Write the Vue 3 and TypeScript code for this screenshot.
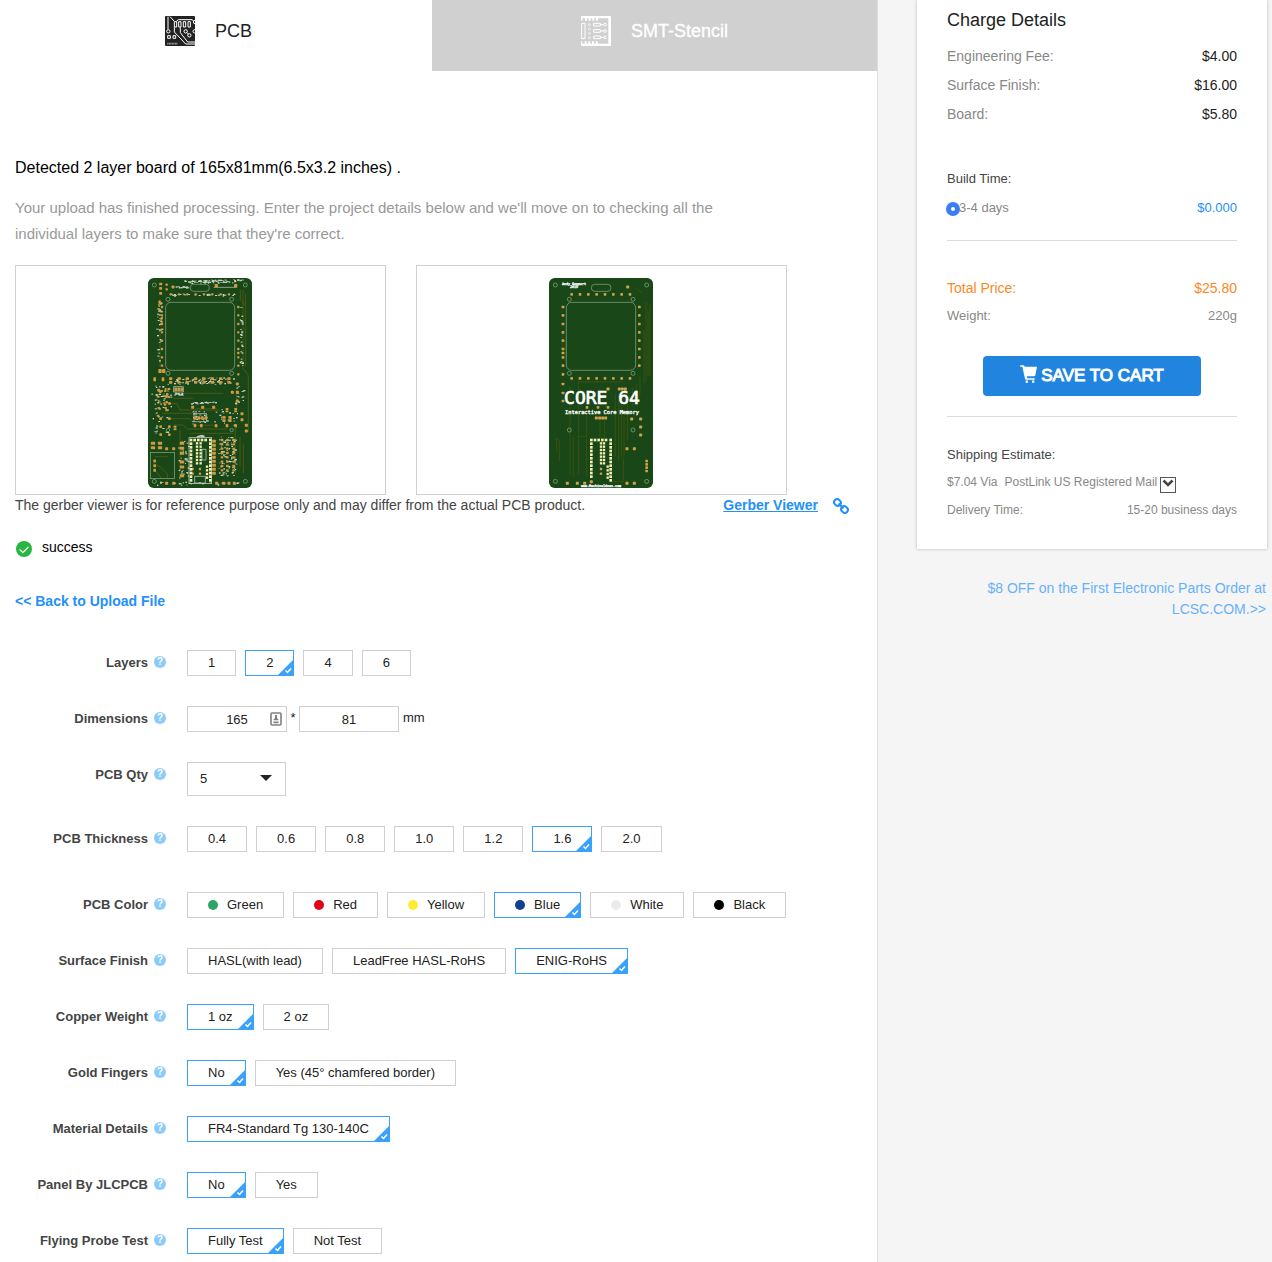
<script setup lang="ts">
import { reactive, ref } from 'vue'

interface Option {
  label: string
  swatch?: string
}

interface OptionRow {
  key: string
  label: string
  options: Option[]
  spaced?: boolean
}

interface Pad {
  x: number
  y: number
  w: number
  h: number
}

const plain = (...labels: string[]): Option[] => labels.map((label) => ({ label }))

const layerRow: OptionRow = { key: 'layers', label: 'Layers', options: plain('1', '2', '4', '6') }

const optionRows: OptionRow[] = [
  { key: 'thickness', label: 'PCB Thickness', options: plain('0.4', '0.6', '0.8', '1.0', '1.2', '1.6', '2.0'), spaced: true },
  {
    key: 'color',
    label: 'PCB Color',
    options: [
      { label: 'Green', swatch: '#2ea566' },
      { label: 'Red', swatch: '#e2001a' },
      { label: 'Yellow', swatch: '#ffeb36' },
      { label: 'Blue', swatch: '#10408f' },
      { label: 'White', swatch: '#ebebeb' },
      { label: 'Black', swatch: '#000000' },
    ],
  },
  { key: 'finish', label: 'Surface Finish', options: plain('HASL(with lead)', 'LeadFree HASL-RoHS', 'ENIG-RoHS') },
  { key: 'copper', label: 'Copper Weight', options: plain('1 oz', '2 oz') },
  { key: 'gold', label: 'Gold Fingers', options: plain('No', 'Yes (45° chamfered border)') },
  { key: 'material', label: 'Material Details', options: plain('FR4-Standard Tg 130-140C') },
  { key: 'panel', label: 'Panel By JLCPCB', options: plain('No', 'Yes') },
  { key: 'probe', label: 'Flying Probe Test', options: plain('Fully Test', 'Not Test') },
]

const selected = reactive<Record<string, string>>({
  layers: '2',
  thickness: '1.6',
  color: 'Blue',
  finish: 'ENIG-RoHS',
  copper: '1 oz',
  gold: 'No',
  material: 'FR4-Standard Tg 130-140C',
  panel: 'No',
  probe: 'Fully Test',
})

const boardWidth = ref('165')
const boardHeight = ref('81')
const quantity = ref('5')
const shipping = ref('PostLink US Registered Mail')
const buildTime = ref('3-4 days')

const charges = [
  { label: 'Engineering Fee:', amount: '$4.00' },
  { label: 'Surface Finish:', amount: '$16.00' },
  { label: 'Board:', amount: '$5.80' },
]

/* Deterministic scatter, so that the board art is the same on every load. */
function makeRandom(seed: number) {
  let s = seed
  return () => {
    s = (s * 16807) % 2147483647
    return s / 2147483647
  }
}

function scatter(seed: number, count: number, x: number, y: number, w: number, h: number, pw: number, ph: number): Pad[] {
  const rnd = makeRandom(seed * 7919)
  rnd()
  return Array.from({ length: count }, () => ({
    x: Math.round(x + rnd() * w),
    y: Math.round(y + rnd() * h),
    w: pw + Math.round(rnd() * 3),
    h: ph + Math.round(rnd() * 2),
  }))
}

function grid(xs: number[], ys: number[], w: number, h = w): Pad[] {
  return xs.flatMap((x) => ys.map((y) => ({ x: x - w / 2, y: y - h / 2, w, h })))
}

const steps = (from: number, to: number, by: number): number[] => {
  const out: number[] = []
  for (let v = from; v <= to; v += by) out.push(v)
  return out
}

const frontGold: Pad[] = [
  ...grid(steps(92, 280, 25), [73], 7),
  ...grid([295], [111, 136, 162, 187, 212, 237, 249, 262, 287, 313], 7),
  ...grid([66], [111, 136, 162, 187, 212, 237, 262, 287], 7),
  ...grid([229, 287], [47], 10),
  ...grid([62], [42, 55, 70], 9, 8),
  ...grid([80], [44, 58], 7),
  ...grid([99], [51], 9),
  ...grid(steps(92, 280, 25), [326, 337], 10, 8),
  ...scatter(11, 20, 54, 90, 10, 90, 4, 4),
  ...grid([60, 71], [303], 10, 12),
  ...grid([44, 69], [328], 8, 12),
  ...grid([107, 116, 125], [358], 8, 11),
  ...scatter(5, 26, 50, 345, 34, 90, 6, 5),
  ...grid([158, 188, 221], [412], 9),
  ...grid([166, 177, 187, 197], [444], 8, 10),
  ...grid([252, 270], [442, 452], 10, 8),
  ...grid([261, 287], [417, 424], 9, 6),
  ...grid([165, 184, 228, 261, 287], [467], 8, 10),
  ...grid([277, 292], [367], 9),
  ...grid([292], [342, 393], 9),
  ...grid([306], [431, 449], 9),
  ...grid([319], [466, 483], 9),
  ...grid([62, 88], [446, 470, 494], 8),
  ...grid([105], [470, 478], 9, 6),
  ...grid([39, 60], [520, 533], 13, 9),
  ...grid([80, 101], [536, 640], 9),
  ...grid([44], [573, 587, 601], 8, 9),
  ...grid([126], [520, 535, 550, 576, 591, 617], 13, 9),
  ...grid([222], steps(514, 620, 12), 11, 9),
  ...grid([246, 262, 281], steps(510, 612, 13), 8, 7),
  ...grid([230, 251, 267, 283], [640], 9),
  ...grid([158, 180], [597, 611], 7),
]
const frontPale: Pad[] = [
  ...grid([153, 211], steps(510, 636, 11), 8),
  ...grid(steps(164, 206, 11), [510], 8),
  ...grid([171, 182], steps(520, 580, 10), 7),
  ...grid([201], [590, 601, 612, 623], 7),
]
const frontSilk: Pad[] = [
  ...scatter(3, 40, 130, 30, 78, 8, 4, 2),
  ...scatter(4, 40, 208, 28, 98, 10, 4, 2),
  ...scatter(6, 14, 104, 48, 38, 5, 4, 2),
  ...scatter(31, 28, 88, 71, 195, 5, 4, 2),
  ...scatter(8, 34, 49, 95, 15, 180, 4, 2),
  ...scatter(9, 26, 298, 105, 8, 190, 4, 2),
  ...scatter(10, 75, 80, 322, 200, 20, 3, 2),
  ...scatter(12, 50, 34, 345, 58, 145, 4, 2),
  ...scatter(13, 14, 100, 367, 30, 8, 4, 2),
  ...scatter(14, 24, 148, 395, 80, 5, 4, 2),
  ...scatter(15, 28, 156, 422, 44, 40, 3, 2),
  ...scatter(16, 22, 222, 410, 70, 60, 3, 2),
  ...scatter(17, 16, 285, 340, 26, 70, 4, 2),
  ...scatter(18, 32, 114, 510, 30, 118, 3, 2),
  ...scatter(19, 100, 235, 500, 56, 118, 3, 2),
  ...scatter(20, 26, 44, 634, 250, 10, 3, 2),
  ...scatter(21, 16, 166, 495, 28, 5, 4, 2),
]

const backGold: Pad[] = [
  ...grid(steps(95, 280, 25), [73, 325], 8),
  ...grid([69], [111, 136, 162, 187, 212, 237, 249, 262, 287, 313, 342, 369, 393], 8),
  ...grid([298], [111, 136, 162, 187, 212, 237, 262, 287], 8),
  ...grid([263], [51], 9),
  ...grid([204, 238, 247, 256], [357], 9),
  ...grid([141, 174, 204], [412], 8),
  ...grid([169, 179, 188, 197], [444], 9),
  ...grid([275, 302], [447], 9),
  ...grid([302], [471, 495], 9),
  ...grid([261, 283], [536, 640], 9),
  ...grid([320], [573, 583, 593, 603], 8),
  ...grid([82, 112, 134], [640], 9),
  ...grid([183], [597, 611], 7),
  ...grid([154], [635], 9),
]
const backPale: Pad[] = [
  ...grid([154], steps(510, 626, 11), 8),
  ...grid([212], steps(510, 636, 11), 8),
  ...grid(steps(165, 206, 11), [510], 8),
  ...grid([183, 192], steps(520, 580, 10), 7),
  ...grid([203], [590, 601, 612, 623], 7),
]

const frontTraces =
  'M309 60v235l16 22v170M317 70v220M301 60v30l14 14M60 190v100M66 430h90l14-14h60M90 446h60l20 20h50M100 465h30l12 12h120M300 500v90M310 520v90M50 400h60l10 20h120M40 580l22 12 20 20v14M44 600l20 24M44 560l40 0M150 490h130M286 470v140M120 480v150M290 360v60M130 370h120M100 385h60'
const backTraces =
  'M318 96v240M324 120v200M330 100v220M312 180v160M288 55l20 14M68 190v60M76 210v60M116 332v280M90 350v265M100 500v120M120 336h130M140 418v200M226 370v190M236 370v200M244 380v180M252 440v120M262 380v130M290 340v60M278 350v60M44 505l14 6v62M50 505v40M214 635h36v-70M180 450v55M194 450v55M110 500h30M300 320v50l-10 20'
</script>

<template>
  <div class="page">
    <main class="order">
      <nav class="tabs" aria-label="Product">
        <button type="button" class="tab tab-active">
          <svg class="tab-icon" viewBox="0 0 90 90" aria-hidden="true">
            <rect width="90" height="90" rx="3" fill="#222" />
            <g fill="none" stroke="#fff" stroke-width="3">
              <path d="M9 2v38M15 2l13 14M34 16l6-5h42l4 5M28 34v14l34 36h28M46 34v16l22 28h22" />
              <path d="M28 17h7v16h-7zM41 17h7v16h-7zM55 17h7v16h-7zM69 17h7v16h-7z" />
              <circle cx="10" cy="46" r="5" />
              <circle cx="62" cy="46" r="5" />
              <circle cx="73" cy="58" r="5" />
              <circle cx="89" cy="46" r="5" />
              <circle cx="90" cy="18" r="5" />
              <path d="M66 50l4 4M8 59h8v8H8zM24 59h8v8h-8z" />
            </g>
            <path d="M7 83h30" stroke="#aaa" stroke-width="5" stroke-dasharray="3 1.5" />
          </svg>
          <span>PCB</span>
        </button>
        <button type="button" class="tab tab-idle">
          <svg class="tab-icon" viewBox="0 0 90 90" aria-hidden="true">
            <path
              fill="#fff"
              d="M0 0h87q3 0 3 3v84q0 3-3 3H0V76h4v7h7v-7h6v7h5v-7h6v7h5v-7h6v7h5v-7h6v7h32V7H51v7h-6V7h-5v7h-6V7h-5v7h-6V7h-5v7h-6V7H4v7H0z"
            />
            <g fill="none" stroke="#fff" stroke-width="3">
              <path d="M2 22h10v46H2zM38 22h20v8H38zM38 41h20v8H38zM38 60h20v8H38zM58 26h10M58 45h10M58 64h10" />
              <circle cx="72" cy="26" r="4" />
              <circle cx="72" cy="45" r="4" />
              <circle cx="72" cy="64" r="4" />
              <g stroke-width="2">
                <circle cx="25" cy="26" r="3" />
                <circle cx="25" cy="39" r="3" />
                <circle cx="25" cy="52" r="3" />
                <circle cx="25" cy="65" r="3" />
              </g>
            </g>
          </svg>
          <span>SMT-Stencil</span>
        </button>
      </nav>

      <div class="content">
        <h1 class="detected">Detected 2 layer board of 165x81mm(6.5x3.2 inches) .</h1>
        <p class="intro">
          Your upload has finished processing. Enter the project details below and we'll move on to checking all the individual
          layers to make sure that they're correct.
        </p>

        <div class="previews">
          <div class="preview">
            <svg class="board" viewBox="24 24 312 630" role="img" aria-label="Board front">
              <rect x="24" y="24" width="312" height="630" rx="17" fill="#1a4718" />
              <path :d="frontTraces" fill="none" stroke="#4a5a14" stroke-width="3" />
              <g fill="none" stroke="#8fae8c" stroke-width="2">
                <rect x="77" y="97" width="207" height="204" rx="16" />
                <rect x="151" y="43" width="57" height="21" rx="10" />
                <path d="M221 52h70" stroke="#c3d1c1" />
                <circle cx="84" cy="88" r="6" />
                <circle cx="275" cy="88" r="6" />
                <circle cx="84" cy="310" r="6" />
                <circle cx="275" cy="310" r="6" />
                <circle cx="84" cy="480" r="5" />
                <circle cx="275" cy="480" r="5" />
                <circle cx="43" cy="45" r="6" />
                <circle cx="316" cy="45" r="6" />
                <circle cx="43" cy="634" r="6" />
                <circle cx="316" cy="634" r="6" />
                <rect x="31" y="547" width="72" height="79" />
                <rect x="147" y="503" width="68" height="138" stroke="#d5ddd4" />
                <path d="M101 350h29v16h-29zM162 431h38v24h-38zM186 538h12v32h-12zM164 619h32v20h-32z" stroke="#d5ddd4" />
              </g>
              <rect v-for="(p, i) in frontSilk" :key="'s' + i" :x="p.x" :y="p.y" :width="p.w" :height="p.h" fill="#c8d3c4" />
              <rect v-for="(p, i) in frontGold" :key="'g' + i" :x="p.x" :y="p.y" :width="p.w" :height="p.h" rx="2" fill="#d09a40" />
              <rect v-for="(p, i) in frontPale" :key="'p' + i" :x="p.x" :y="p.y" :width="p.w" :height="p.h" fill="#f3efb4" />
            </svg>
          </div>
          <div class="preview">
            <svg class="board" viewBox="27 24 312 630" role="img" aria-label="Board back">
              <rect x="27" y="24" width="312" height="630" rx="17" fill="#1a4718" />
              <path :d="backTraces" fill="none" stroke="#38520f" stroke-width="3" />
              <g fill="none" stroke="#8fae8c" stroke-width="2">
                <rect x="79" y="97" width="208" height="204" rx="16" />
                <rect x="154" y="43" width="59" height="21" rx="10" />
                <circle cx="88" cy="88" r="6" />
                <circle cx="279" cy="88" r="6" />
                <circle cx="88" cy="310" r="6" />
                <circle cx="279" cy="310" r="6" />
                <circle cx="88" cy="480" r="6" />
                <circle cx="279" cy="480" r="6" />
                <circle cx="46" cy="45" r="6" />
                <circle cx="320" cy="45" r="6" />
                <circle cx="46" cy="634" r="6" />
                <circle cx="320" cy="634" r="6" />
              </g>
              <rect v-for="(p, i) in backGold" :key="'g' + i" :x="p.x" :y="p.y" :width="p.w" :height="p.h" rx="2" fill="#d0a24a" />
              <rect v-for="(p, i) in backPale" :key="'p' + i" :x="p.x" :y="p.y" :width="p.w" :height="p.h" fill="#f3efb4" />
              <g class="silk-text" text-anchor="middle">
                <text x="102" y="44" font-size="10">Andy Geppert</text>
                <text x="102" y="55" font-size="10">2019</text>
                <text x="186" y="402" font-size="54" stroke-width="2">CORE 64</text>
                <text x="186" y="432" font-size="16">Interactive Core Memory</text>
                <text x="183" y="650" font-size="10">www.MachineIdeas.com</text>
              </g>
            </svg>
          </div>
        </div>

        <div class="caption">
          <span>The gerber viewer is for reference purpose only and may differ from the actual PCB product.</span>
          <a class="viewer-link" href="#">
            <span class="viewer-text">Gerber Viewer</span>
            <svg class="chain" viewBox="0 0 16 16" aria-hidden="true">
              <g fill="none" stroke="#2490fa" stroke-width="2">
                <rect x="1" y="1.500" width="7" height="6" rx="3" transform="rotate(45 4.500 4.500)" />
                <rect x="8" y="8.500" width="7" height="6" rx="3" transform="rotate(45 11.500 11.500)" />
                <path d="M5.500 5.500l5 5" />
              </g>
            </svg>
          </a>
        </div>

        <p class="status">
          <svg class="status-icon" viewBox="0 0 16 16" aria-hidden="true">
            <circle cx="8" cy="8" r="8" fill="#28b540" />
            <path d="M3.6 8.4l3.2 3.2 5.6-5.6" fill="none" stroke="#fff" stroke-width="1.3" />
          </svg>
          <span>success</span>
        </p>

        <a class="back" href="#">&lt;&lt; Back to Upload File</a>

        <form class="form" @submit.prevent>
          <div class="row">
            <span id="label-layers" class="label">{{ layerRow.label }}<span class="help">?</span></span>
            <div class="options" role="group" aria-labelledby="label-layers">
              <button
                v-for="option in layerRow.options"
                :key="option.label"
                type="button"
                class="chip"
                :class="{ on: selected.layers === option.label }"
                :aria-pressed="selected.layers === option.label"
                @click="selected.layers = option.label"
              >
                {{ option.label }}
                <svg v-if="selected.layers === option.label" class="corner" viewBox="0 0 17 17" aria-hidden="true">
                  <path d="M17 0v17H0z" fill="#3aa1fb" />
                  <path d="M8.500 11.500l2 2 3.500-4" fill="none" stroke="#fff" stroke-width="1.500" />
                </svg>
              </button>
            </div>
          </div>

          <div class="row">
            <label class="label" for="board-width">Dimensions<span class="help">?</span></label>
            <div class="dimensions">
              <span class="field">
                <input id="board-width" v-model="boardWidth" type="text" />
                <svg class="autofill" viewBox="0 0 12 14" aria-hidden="true">
                  <rect x="1" y="1" width="10" height="12" rx="1" fill="#fff" stroke="#808080" stroke-width="1.6" />
                  <path d="M5 3h2v3l1.5 1.5v.8h-5v-.8L5 6zM3.5 9.4h5v1.8h-5z" fill="#808080" />
                </svg>
              </span>
              <span class="times">*</span>
              <span class="field"><input v-model="boardHeight" type="text" aria-label="Board height" /></span>
              <span class="unit">mm</span>
            </div>
          </div>

          <div class="row">
            <label class="label" for="quantity">PCB Qty<span class="help">?</span></label>
            <div class="quantity">
              <select id="quantity" v-model="quantity">
                <option>5</option>
                <option>10</option>
                <option>20</option>
              </select>
              <svg class="caret" viewBox="0 0 12 6" aria-hidden="true"><path d="M0 0h12L6 6z" fill="#222" /></svg>
            </div>
          </div>

          <div v-for="row in optionRows" :key="row.key" class="row" :class="{ spaced: row.spaced }">
            <span :id="'label-' + row.key" class="label">{{ row.label }}<span class="help">?</span></span>
            <div class="options" role="group" :aria-labelledby="'label-' + row.key">
              <button
                v-for="option in row.options"
                :key="option.label"
                type="button"
                class="chip"
                :class="{ on: selected[row.key] === option.label }"
                :aria-pressed="selected[row.key] === option.label"
                @click="selected[row.key] = option.label"
              >
                <span v-if="option.swatch" class="swatch" :style="{ background: option.swatch }"></span>
                {{ option.label }}
                <svg v-if="selected[row.key] === option.label" class="corner" viewBox="0 0 17 17" aria-hidden="true">
                  <path d="M17 0v17H0z" fill="#3aa1fb" />
                  <path d="M8.500 11.500l2 2 3.500-4" fill="none" stroke="#fff" stroke-width="1.500" />
                </svg>
              </button>
            </div>
          </div>
        </form>
      </div>
    </main>

    <aside class="side">
      <section class="card">
        <h2 class="card-title">Charge Details</h2>
        <div v-for="charge in charges" :key="charge.label" class="line charge">
          <span>{{ charge.label }}</span>
          <span class="amount">{{ charge.amount }}</span>
        </div>

        <h3 class="sub build">Build Time:</h3>
        <div class="line build-line">
          <label class="choice"><input v-model="buildTime" type="radio" name="build" value="3-4 days" />3-4 days</label>
          <span class="blue">$0.000</span>
        </div>
        <hr />

        <div class="line total">
          <span>Total Price:</span>
          <span>$25.80</span>
        </div>
        <div class="line weight">
          <span>Weight:</span>
          <span>220g</span>
        </div>
        <button type="button" class="save">
          <svg class="cart" viewBox="0 0 51 56" aria-hidden="true">
            <path
              fill="#fff"
              d="M2 0h8q2 0 3 2l1 3h37l-5 25q-1 3-4 3H20l2 6h22v5H18q-2 0-3-3L7 5H2Q0 5 0 2.500T2 0z"
            />
            <path d="M17 46h7v7h-7zM36 46h7v7h-7z" fill="#fff" />
          </svg>
          <span>SAVE TO CART</span>
        </button>
        <hr class="lower" />

        <h3 class="sub shipping">Shipping Estimate:</h3>
        <div class="line small carrier">
          <label for="carrier">$7.04 Via</label>
          <span class="carrier-pick">
            <select id="carrier" v-model="shipping">
              <option>PostLink US Registered Mail</option>
            </select>
            <svg class="carrier-arrow" viewBox="0 0 16 16" aria-hidden="true">
              <rect x="0.500" y="0.500" width="15" height="15" fill="#fff" stroke="#555" />
              <path d="M3.500 3.500L8 8l4.500-4.500" fill="none" stroke="#444" stroke-width="2.600" />
            </svg>
          </span>
        </div>
        <div class="line small">
          <span>Delivery Time:</span>
          <span>15-20 business days</span>
        </div>
      </section>
      <a class="promo" href="#">$8 OFF on the First Electronic Parts Order at LCSC.COM.&gt;&gt;</a>
    </aside>
  </div>
</template>

<style>
body {
  background: #f5f5f5;
}
</style>

<style scoped>
.page {
  display: grid;
  grid-template-columns: minmax(0, 1fr) 394px;
  min-height: 100vh;
  font-family: 'Liberation Sans', Arial, Helvetica, sans-serif;
  font-size: 13px;
  color: #222;
}

.page *,
.page {
  box-sizing: border-box;
}

button,
input,
select {
  margin: 0;
  font: inherit;
  color: inherit;
}

h1,
h2,
h3,
p {
  margin: 0;
  font-weight: normal;
}

a {
  color: #2490fa;
  text-decoration: none;
}

.order {
  background: #fff;
  border-right: 1px solid #ddd;
}

.tabs {
  display: grid;
  grid-template-columns: 432fr 445fr;
}

.tab {
  display: flex;
  align-items: center;
  justify-content: center;
  gap: 20px;
  height: 71px;
  padding: 0 0 9px;
  border: 0;
  background: #fff;
  font-size: 18px;
}

.tab-active {
  padding-right: 15px;
}

.tab-idle {
  background: #d0d0d0;
  color: #fff;
  -webkit-text-stroke: 0.3px #fff;
}

.tab-icon {
  width: 30px;
  height: 30px;
}

.content {
  padding: 85px 28px 8px 15px;
}

.detected {
  font-size: 16px;
  line-height: 24px;
  color: #000;
}

.intro {
  max-width: 750px;
  margin-top: 15px;
  font-size: 15px;
  line-height: 26px;
  color: #999;
}

.previews {
  display: grid;
  grid-template-columns: 1fr 1fr;
  gap: 30px;
  max-width: 772px;
  margin-top: 18px;
}

.preview {
  display: flex;
  justify-content: center;
  padding: 12px 1px 6px 0;
  border: 1px solid #d0d0d0;
}

.board {
  width: 104px;
  height: 210px;
}

.silk-text {
  font-family: 'DejaVu Sans Mono', monospace;
  fill: #fff;
  stroke: #fff;
  stroke-width: 1px;
}

.caption {
  display: flex;
  justify-content: space-between;
  font-size: 14px;
  line-height: 20px;
  color: #444;
}

.viewer-link {
  display: flex;
  align-items: center;
  gap: 15px;
  font-weight: bold;
}

.viewer-text {
  text-decoration: underline;
}

.chain {
  width: 16px;
  height: 16px;
  margin-top: 2px;
}

.status {
  display: flex;
  align-items: center;
  gap: 10px;
  margin: 22px 0 0 1px;
  font-size: 14px;
  line-height: 20px;
  color: #000;
}

.status-icon {
  width: 16px;
  height: 16px;
  margin-top: 3px;
}

.back {
  display: block;
  margin-top: 34px;
  font-size: 14px;
  font-weight: bold;
  line-height: 20px;
}

.form {
  display: flex;
  flex-direction: column;
  gap: 30px;
  margin-top: 39px;
}

.row {
  display: grid;
  grid-template-columns: 151px minmax(0, 1fr);
  column-gap: 21px;
  align-items: start;
}

.spaced {
  margin-bottom: 10px;
}

.label {
  display: flex;
  align-items: center;
  justify-content: flex-end;
  gap: 6px;
  font-weight: bold;
  line-height: 26px;
  color: #444;
}

.help {
  width: 12px;
  height: 12px;
  margin-bottom: 2px;
  border-radius: 50%;
  background: #8ccbf9;
  color: #fff;
  font-size: 10px;
  line-height: 12px;
  text-align: center;
}

.options {
  display: flex;
  flex-wrap: wrap;
  gap: 9px;
}

.chip {
  position: relative;
  display: flex;
  align-items: center;
  height: 26px;
  padding: 0 20px;
  border: 1px solid #d0d0d0;
  background: #fff;
  line-height: 24px;
  white-space: nowrap;
}

.on {
  border-color: #3aa1fb;
}

.corner {
  position: absolute;
  right: -1px;
  bottom: -1px;
  width: 17px;
  height: 17px;
}

.swatch {
  width: 10px;
  height: 10px;
  margin-right: 9px;
  border-radius: 50%;
}

.dimensions {
  display: flex;
  line-height: 24px;
}

.field {
  position: relative;
  display: flex;
}

.field input {
  width: 100px;
  height: 26px;
  padding: 0;
  border: 1px solid #d0d0d0;
  background: #fff;
  text-align: center;
}

.autofill {
  position: absolute;
  top: 6px;
  right: 5px;
  width: 12px;
  height: 14px;
}

.times {
  width: 12px;
  text-align: center;
}

.unit {
  margin-left: 4px;
}

.quantity {
  position: relative;
  width: 99px;
}

.quantity select {
  display: block;
  width: 100%;
  height: 34px;
  padding: 0 12px 1px;
  border: 1px solid #d0d0d0;
  border-radius: 0;
  background: #fff;
  appearance: none;
}

.caret {
  position: absolute;
  top: 13px;
  right: 14px;
  width: 12px;
  height: 6px;
  pointer-events: none;
}

.side {
  padding: 0 5px 0 39px;
}

.card {
  padding: 8px 30px 24px;
  background: #fff;
  box-shadow: 0 0 3px rgba(0, 0, 0, 0.25);
  color: #888;
}

.card-title {
  margin-bottom: 10px;
  font-size: 18px;
  line-height: 24px;
  color: #222;
}

.line {
  display: flex;
  justify-content: space-between;
  line-height: 29px;
}

.charge,
.total {
  font-size: 14px;
}

.amount {
  color: #222;
}

.sub {
  font-size: 13px;
  line-height: 29px;
  color: #444;
}

.build {
  margin-top: 35px;
}

.choice {
  display: flex;
  align-items: center;
}

.choice input {
  width: 14px;
  height: 14px;
  margin: 2px -1px 0;
  border: 5px solid #3b7df6;
  border-radius: 50%;
  background: #fff;
  appearance: none;
}

.blue {
  color: #2490fa;
}

hr {
  height: 1px;
  margin: 18px 0 0;
  border: 0;
  background: #ddd;
}

.total {
  margin-top: 33px;
  color: #fb8826;
}

.weight {
  line-height: 26px;
}

.save {
  display: flex;
  align-items: center;
  justify-content: center;
  gap: 4px;
  width: 218px;
  height: 40px;
  margin: 27px auto 0;
  padding: 0;
  border: 0;
  border-radius: 4px;
  background: #2185df;
  color: #fff;
  font-size: 17px;
  -webkit-text-stroke: 1px #fff;
}

.cart {
  width: 17px;
  height: 19px;
  margin-bottom: 3px;
}

.lower {
  margin-top: 20px;
}

.shipping {
  margin-top: 23px;
}

.small {
  font-size: 12px;
}

.carrier {
  justify-content: flex-start;
  gap: 7px;
  line-height: 27px;
}

.carrier-pick {
  position: relative;
  display: flex;
}

.carrier-pick select {
  height: 27px;
  padding: 0 18px 0 0;
  border: 0;
  background: transparent;
  appearance: none;
}

.carrier-arrow {
  position: absolute;
  top: 8px;
  right: 0;
  width: 16px;
  height: 16px;
  pointer-events: none;
}

.promo {
  display: block;
  margin: 29px 1px 0 0;
  color: #67b1f9;
  font-size: 14px;
  line-height: 21px;
  text-align: right;
}
</style>
